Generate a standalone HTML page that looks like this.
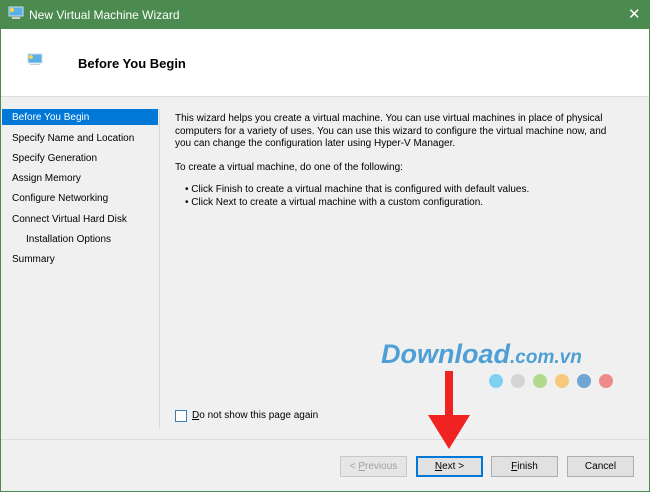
<!DOCTYPE html>
<html><head><style>
*{margin:0;padding:0;box-sizing:border-box}
body{width:650px;height:492px;overflow:hidden;background:#4b8b4f;font-family:"Liberation Sans",sans-serif;font-size:10px;color:#000;position:relative}
.win{position:absolute;left:1px;top:29px;width:648px;height:462px;background:#f0f0f0}
.hdr{position:absolute;left:0;top:0;width:648px;height:68px;background:#fff;border-bottom:1px solid #dcdcdc}
.a{position:absolute;white-space:nowrap}
.nav div{position:absolute;left:11px}
.btn{position:absolute;top:427px;height:21px;border:1px solid #adadad;background:#e1e1e1;text-align:center;line-height:19px}
.dot{position:absolute;top:345px;width:14px;height:14px;border-radius:50%}
</style></head><body>
<svg class="a" style="left:8px;top:6px" width="16" height="14"><rect x="1" y="1" width="14" height="9" fill="#5bb0e8" stroke="#cde" /><circle cx="4" cy="4" r="2" fill="#ffd54a"/><rect x="4" y="11" width="8" height="2" fill="#ccc"/></svg>
<div class="a" style="left:29px;top:8px;color:#fff;font-size:12px">New Virtual Machine Wizard</div>
<div class="a" style="left:628px;top:5px;color:#fff;font-size:15px">✕</div>
<div class="win">
<div class="hdr">
<svg class="a" style="left:26px;top:24px" width="16" height="14"><rect x="1" y="1" width="14" height="9" fill="#5bb0e8" stroke="#cde"/><circle cx="4" cy="4" r="2" fill="#ffd54a"/><rect x="3" y="11" width="10" height="1" fill="#ccc"/></svg>
<div class="a" style="left:77px;top:27px;font-size:13px;font-weight:bold">Before You Begin</div>
</div>
<div class="a" style="left:1px;top:80px;width:156px;height:16px;background:#0078d7"></div>
<div class="nav">
<div style="top:83px;color:#fff">Before You Begin</div>
<div style="top:104px">Specify Name and Location</div>
<div style="top:124px">Specify Generation</div>
<div style="top:144px">Assign Memory</div>
<div style="top:164px">Configure Networking</div>
<div style="top:185px">Connect Virtual Hard Disk</div>
<div style="top:205px;left:25px">Installation Options</div>
<div style="top:225px">Summary</div>
</div>
<div class="a" style="left:158px;top:80px;width:1px;height:320px;background:#d8d8d8"></div>
<div class="a" style="left:174px;top:84px;line-height:12.5px">This wizard helps you create a virtual machine. You can use virtual machines in place of physical<br>computers for a variety of uses. You can use this wizard to configure the virtual machine now, and<br>you can change the configuration later using Hyper-V Manager.</div>
<div class="a" style="left:174px;top:133px">To create a virtual machine, do one of the following:</div>
<div class="a" style="left:184px;top:155px;line-height:12.5px">• Click Finish to create a virtual machine that is configured with default values.<br>• Click Next to create a virtual machine with a custom configuration.</div>
<div class="a" style="left:174px;top:381px;width:12px;height:12px;border:1px solid #3c7fb1;background:#fff"></div>
<div class="a" style="left:191px;top:381px"><u>D</u>o not show this page again</div>
<div class="a" style="left:0;top:410px;width:648px;height:1px;background:#dcdcdc"></div>
<div class="a" style="left:380px;top:310px;font-size:27px;font-weight:bold;font-style:italic;color:#4d9fd6">Download<span style="font-size:19px">.com.vn</span></div>
<div class="dot" style="left:488px;background:#7fd0f2"></div>
<div class="dot" style="left:510px;background:#d4d4d4"></div>
<div class="dot" style="left:532px;background:#b2d98c"></div>
<div class="dot" style="left:554px;background:#f6c97e"></div>
<div class="dot" style="left:576px;background:#6fa6d6"></div>
<div class="dot" style="left:598px;background:#ef8a8a"></div>
<div class="a" style="left:444px;top:342px;width:8px;height:45px;background:#f02222"></div>
<div class="a" style="left:427px;top:386px;width:0;height:0;border-left:21px solid transparent;border-right:21px solid transparent;border-top:34px solid #f02222"></div>
<div class="btn" style="left:339px;width:67px;color:#a0a0a0;border-color:#c8c8c8;background:#e6e6e6">&lt; <u>P</u>revious</div>
<div class="btn" style="left:415px;width:67px;border:2px solid #0078d7;line-height:17px"><u>N</u>ext &gt;</div>
<div class="btn" style="left:490px;width:67px"><u>F</u>inish</div>
<div class="btn" style="left:566px;width:67px">Cancel</div>
</div>
</body></html>
